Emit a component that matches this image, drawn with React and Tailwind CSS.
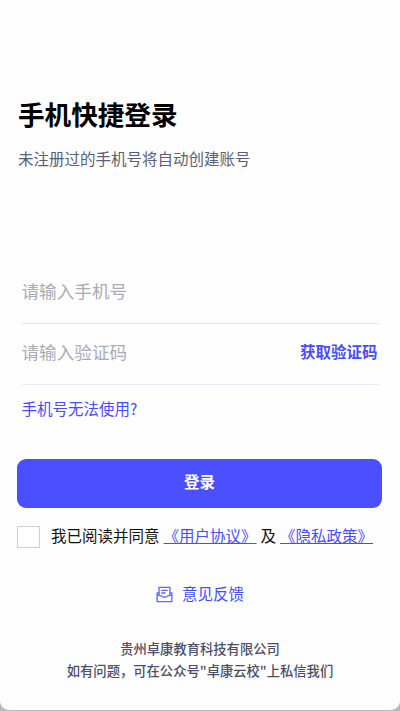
import React, { useState } from "react";

const FeedbackIcon = () => (
  <svg
    width="17"
    height="17"
    viewBox="0 0 18 18"
    fill="none"
    stroke="#6467fa"
    strokeWidth="1.4"
    strokeLinejoin="round"
    strokeLinecap="round"
  >
    <path d="M3.2 9V1.4H14.8V9" />
    <path d="M3.2 7.4H1.2V16.6H16.8V7.4H14.8" />
    <path d="M1.4 9.6L5.6 10.4C6.4 12.4 11.6 12.4 12.4 10.4L16.6 9.6" />
    <path d="M6 4.6H12M6 7.4H9.6" />
  </svg>
);

const App = () => {
  const [phone, setPhone] = useState("");
  const [code, setCode] = useState("");
  const [agreed, setAgreed] = useState(false);

  return (
    <div className="h-[711px] w-[400px] overflow-hidden bg-[#b9b9b9] font-['Noto_Sans_CJK_SC',sans-serif]">
      <div className="flex h-[710px] flex-col rounded-b-[9px] bg-[#fefefe]">
        <div className="px-[18px] pt-[94px]">
          <h1 className="text-[26.6px] leading-10 font-bold text-black">手机快捷登录</h1>
          <p className="mt-[12px] text-[15.5px] leading-6 text-[#5b5f78]">
            未注册过的手机号将自动创建账号
          </p>
        </div>

        <div className="mt-[92px] px-[21.5px]">
          <div className="flex h-[62px] items-center border-b border-[#dfe6fb] pb-[2px]">
            <input
              className="w-full text-[17.6px] outline-none placeholder:text-[#a9abb6]"
              placeholder="请输入手机号"
              value={phone}
              onChange={(e) => setPhone(e.target.value)}
            />
          </div>
          <div className="flex h-[61px] items-center border-b border-[#e5ebfc] pr-[1px] pb-[4px]">
            <input
              className="min-w-0 flex-1 text-[17.6px] outline-none placeholder:text-[#a9abb6]"
              placeholder="请输入验证码"
              value={code}
              onChange={(e) => setCode(e.target.value)}
            />
            <button className="text-[15.5px] font-bold text-[#4a4dff]">获取验证码</button>
          </div>
          <a className="mt-[11px] block text-[15.5px] leading-6 text-[#4a4dff]">手机号无法使用?</a>
        </div>

        <button className="mt-[39px] mr-[18px] ml-[17px] h-[49px] shrink-0 rounded-[9px] bg-[#4a50ff] pb-[3px] text-[15.5px] font-bold text-white">
          登录
        </button>

        <div className="mt-[17px] flex h-6 items-center pl-[17px] text-[15.5px] whitespace-nowrap text-[#111]">
          <button
            className="mr-[11px] h-[22px] w-[23px] border border-[#cfcfcf] bg-white text-xs"
            onClick={() => setAgreed(!agreed)}
          >
            {agreed ? "✓" : ""}
          </button>
          <div className="flex pb-[2px]">
            <span>我已阅读并同意</span>
            <a className="ml-[4px] text-[#4a4dff] underline">《用户协议》</a>
            <span className="mx-[4px]">及</span>
            <a className="text-[#4a4dff] underline">《隐私政策》</a>
          </div>
        </div>

        <div className="mt-[33px] flex h-6 items-center justify-center gap-[9px] text-[15.5px] text-[#4a4dff]">
          <FeedbackIcon />
          <span>意见反馈</span>
        </div>

        <div className="mt-[32px] text-center text-[13.3px] leading-[22px] font-medium text-[#4b4e66]">
          <p>贵州卓康教育科技有限公司</p>
          <p>如有问题，可在公众号"卓康云校"上私信我们</p>
        </div>
      </div>
    </div>
  );
};

export default App;
